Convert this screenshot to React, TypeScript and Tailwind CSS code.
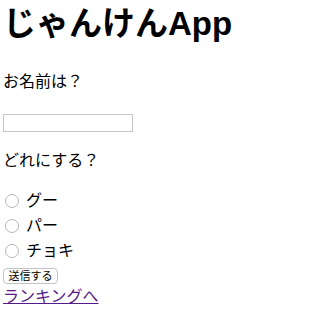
import React from "react";

const FONT = "font-['Liberation_Sans','Noto_Sans_CJK_JP',sans-serif]";

function Radio({ label }: { label: string }) {
  return (
    <label className="flex h-[25px] items-center">
      <span className="ml-[2px] inline-block h-[14px] w-[14px] rounded-full border border-[#b8b8b8] bg-white" />
      <span className="ml-[7px] text-[16px] leading-[24px]">{label}</span>
    </label>
  );
}

export default function App() {
  return (
    <div className={`${FONT} bg-white pl-[3px] text-black`}>
      <h1 className="mt-[8px] text-[33px] font-bold leading-[32px]">じゃんけんApp</h1>
      <p className="mt-[30px] text-[16px] leading-[24px]">お名前は？</p>
      <input
        type="text"
        className="mt-[20px] block h-[18px] w-[130px] border border-[#c6c6c6] bg-white outline-none"
      />
      <p className="mt-[17px] text-[16px] leading-[24px]">どれにする？</p>
      <div className="mt-[15px]">
        <Radio label="グー" />
        <Radio label="パー" />
        <Radio label="チョキ" />
      </div>
      <button className="mt-[5px] flex h-[16px] w-[55px] items-center justify-center rounded-[4px] border border-[#c4c4c4] bg-white text-[11px] leading-[14px]">
        送信する
      </button>
      <a href="#" className="mt-[3px] block w-max text-[16px] leading-[20px] text-[#551a8b] underline">
        ランキングへ
      </a>
    </div>
  );
}
